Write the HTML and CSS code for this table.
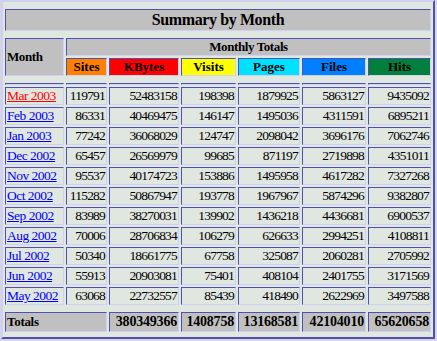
FILE: index.html
```html
<!DOCTYPE html>
<html>
<head>
<meta charset="utf-8">
<title>Summary by Month</title>
<link rel="stylesheet" href="styles.css">
</head>
<body>
<table class="summary">
  <colgroup>
    <col class="c-month"><col class="c-sites"><col class="c-kb"><col class="c-visits"><col class="c-pages"><col class="c-files"><col class="c-hits">
  </colgroup>
  <tr class="spacer"><td colspan="7"></td></tr>
  <tr><th colspan="7" class="title">Summary by Month</th></tr>
  <tr class="spacer"><td colspan="7"></td></tr>
  <tr class="head"><th rowspan="2" class="month-h">Month</th><th colspan="6" class="group-h">Monthly Totals</th></tr>
  <tr class="head metrics">
    <th class="sites">Sites</th><th class="kbytes">KBytes</th><th class="visits">Visits</th><th class="pages">Pages</th><th class="files">Files</th><th class="hits">Hits</th>
  </tr>
  <tr class="spacer"><td colspan="7"></td></tr>
  <tr class="rule"><td></td><td></td><td></td><td></td><td></td><td></td><td></td></tr>
  <tr class="data"><td class="m"><a href="#" class="current">Mar 2003</a></td><td>119791</td><td>52483158</td><td>198398</td><td>1879925</td><td>5863127</td><td>9435092</td></tr>
  <tr class="data"><td class="m"><a href="#">Feb 2003</a></td><td>86331</td><td>40469475</td><td>146147</td><td>1495036</td><td>4311591</td><td>6895211</td></tr>
  <tr class="data"><td class="m"><a href="#">Jan 2003</a></td><td>77242</td><td>36068029</td><td>124747</td><td>2098042</td><td>3696176</td><td>7062746</td></tr>
  <tr class="data"><td class="m"><a href="#">Dec 2002</a></td><td>65457</td><td>26569979</td><td>99685</td><td>871197</td><td>2719898</td><td>4351011</td></tr>
  <tr class="data"><td class="m"><a href="#">Nov 2002</a></td><td>95537</td><td>40174723</td><td>153886</td><td>1495958</td><td>4617282</td><td>7327268</td></tr>
  <tr class="data"><td class="m"><a href="#">Oct 2002</a></td><td>115282</td><td>50867947</td><td>193778</td><td>1967967</td><td>5874296</td><td>9382807</td></tr>
  <tr class="data"><td class="m"><a href="#">Sep 2002</a></td><td>83989</td><td>38270031</td><td>139902</td><td>1436218</td><td>4436681</td><td>6900537</td></tr>
  <tr class="data"><td class="m"><a href="#">Aug 2002</a></td><td>70006</td><td>28706834</td><td>106279</td><td>626633</td><td>2994251</td><td>4108811</td></tr>
  <tr class="data"><td class="m"><a href="#">Jul 2002</a></td><td>50340</td><td>18661775</td><td>67758</td><td>325087</td><td>2060281</td><td>2705992</td></tr>
  <tr class="data"><td class="m"><a href="#">Jun 2002</a></td><td>55913</td><td>20903081</td><td>75401</td><td>408104</td><td>2401755</td><td>3171569</td></tr>
  <tr class="data"><td class="m"><a href="#">May 2002</a></td><td>63068</td><td>22732557</td><td>85439</td><td>418490</td><td>2622969</td><td>3497588</td></tr>
  <tr class="spacer"><td colspan="7"></td></tr>
  <tr class="totals"><th colspan="2" class="label">Totals</th><th>380349366</th><th>1408758</th><th>13168581</th><th>42104010</th><th>65620658</th></tr>
  <tr class="spacer tail"><td colspan="7"></td></tr>
</table>
</body>
</html>
```

FILE: styles.css
```css
html, body {
  margin: 0;
  padding: 0;
  background: #d4d4e6;
}

body {
  font-family: "Liberation Serif", "Times New Roman", serif;
  color: #000;
}

.summary {
  margin-left: 1px;
  width: 434px;
  table-layout: fixed;
  border-collapse: separate;
  border-spacing: 2px;
  border: 2px solid;
  border-color: #d0d0f0 #5050b0 #5050b0 #d0d0f0;
  background: #e0e6e0;
}

.c-month { width: 59px; }
.c-sites { width: 41px; }
.c-kb { width: 70px; }
.c-visits { width: 55px; }
.c-pages { width: 62px; }
.c-files { width: 64px; }
.c-hits { width: 63px; }

.summary th,
.summary td {
  box-sizing: border-box;
  padding: 0 1px;
  border: 1px solid;
  border-color: #5050b0 #d0d0f0 #d0d0f0 #5050b0;
  white-space: nowrap;
  overflow: hidden;
}

.summary th {
  background: #c0c0c0;
  font-weight: bold;
}

.spacer td {
  border: 0;
  padding: 0;
  height: 3px;
  line-height: 0;
  font-size: 0;
}

.spacer.tail td {
  height: 1px;
}

.title {
  font-size: 16px;
  letter-spacing: -0.4px;
  line-height: 20px;
  text-align: center;
}

.head th {
  font-size: 13px;
  letter-spacing: -0.4px;
  line-height: 16px;
  text-align: center;
}

.head .month-h {
  text-align: left;
  vertical-align: middle;
}

.metrics th {
  letter-spacing: 0;
}

.metrics .sites { background: #ff8000; }
.metrics .kbytes { background: #ff0000; }
.metrics .visits { background: #ffff00; }
.metrics .pages { background: #00e0ff; }
.metrics .files { background: #0080ff; }
.metrics .hits { background: #00803c; }

.rule td {
  padding: 0;
  height: 2px;
  line-height: 0;
  font-size: 0;
}

.data td {
  font-size: 13.5px;
  letter-spacing: -0.8px;
  line-height: 16px;
  text-align: right;
}

.data td.m {
  text-align: left;
  letter-spacing: -0.5px;
}

.data a {
  color: #0000ff;
  text-decoration: underline;
}

.data a.current {
  color: #ff0000;
}

.totals th {
  font-size: 14px;
  letter-spacing: -0.2px;
  line-height: 18px;
  text-align: right;
}

.totals th.label {
  font-size: 13px;
  letter-spacing: -0.3px;
  text-align: left;
}
```
